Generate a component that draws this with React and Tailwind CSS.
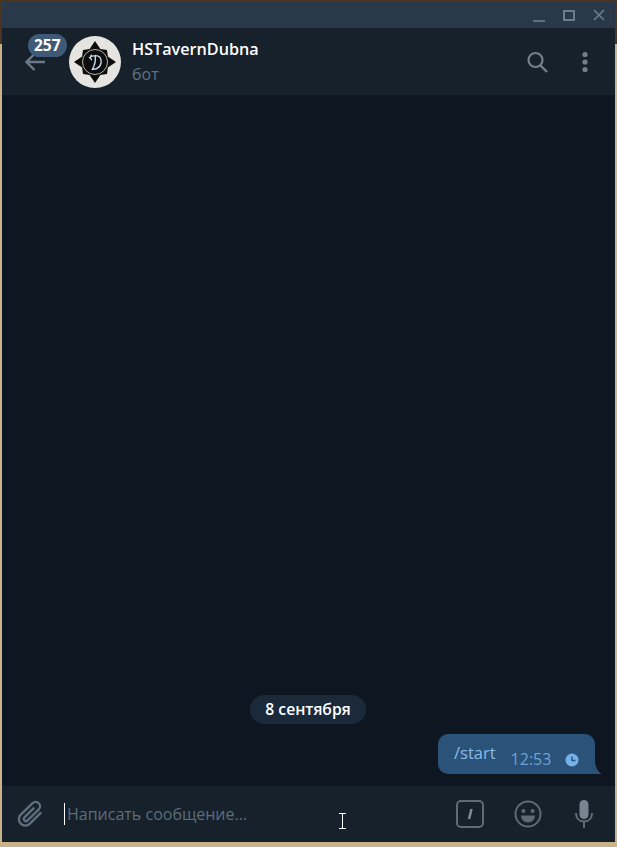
import React from "react";

const font = { fontFamily: '"Open Sans", sans-serif' };

const Avatar = () => (
  <svg viewBox="0 0 52 52" className="w-[52px] h-[52px] shrink-0">
    <circle cx="26" cy="26" r="26" fill="#e6e4e0" />
    <polygon
      points="26,5 31.4,13.1 38,14 38.9,20.6 47,26 38.9,31.4 38,38 31.4,38.9 26,47 20.6,38.9 14,38 13.100,31.4 5,26 13.100,20.6 14,14 20.6,13.100"
      fill="#0d0d0d"
    />
    <circle cx="26" cy="26" r="12.5" fill="#0d0d0d" stroke="#b9b2a6" strokeWidth="1" />
    <path
      d="M20 22c3-3 11-4 12 2 1 6-4 10-9 9M26 19c1 5 0 10-3 15M23 19c-2 1-2 4 0 5"
      fill="none"
      stroke="#c8dcec"
      strokeWidth="1.4"
    />
  </svg>
);

const App = () => {
  return (
    <div
      className="w-[617px] h-[847px] bg-[linear-gradient(#4a3424_44px,#c9b48a_44px)] flex flex-col overflow-hidden"
      style={font}
    >
      <div className="h-[2px] bg-[#4a3424] shrink-0" />
      <div className="flex-1 mx-[2px] mb-[5px] flex flex-col min-h-0">
        {/* title bar */}
        <div className="h-[26px] bg-[#2a3949] flex items-center justify-end shrink-0 pr-[10px] gap-[18px]">
          <div className="w-[12px] h-[2px] bg-[#5f7080] mt-[11px]" />
          <div className="w-[12px] h-[11px] border-2 border-[#6c7d8c]" />
          <svg viewBox="0 0 12 12" className="w-[12px] h-[12px]">
            <path d="M1 1l10 10M11 1L1 11" stroke="#6c7d8c" strokeWidth="1.6" />
          </svg>
        </div>

        {/* header */}
        <div className="h-[67px] bg-[#17212b] flex items-center shrink-0 relative pl-[67px] pr-[27px]">
          <svg viewBox="0 0 20 18" className="absolute left-[23px] top-[25px] w-[20px] h-[18px]">
            <path
              d="M20 9H1.500M9.500 1L1.500 9L9.500 17"
              fill="none"
              stroke="#6b7a88"
              strokeWidth="2.400"
            />
          </svg>
          <div className="absolute left-[26px] top-[6px] h-[23px] px-[6px] rounded-full bg-[#3e5a76] text-white text-[15.500px] font-bold leading-[22px]">
            257
          </div>
          <Avatar />
          <div className="ml-[11px] flex-1">
            <div className="text-white text-[16.200px] font-[550] leading-[22px]">HSTavernDubna</div>
            <div className="text-[#5d7286] text-[16px] leading-[22px] mt-[3px]">бот</div>
          </div>
          <svg viewBox="0 0 24 24" className="w-[24px] h-[24px]">
            <circle cx="10.500" cy="10" r="7" fill="none" stroke="#757f88" strokeWidth="2.2" />
            <path d="M15.500 15.500L22 22" stroke="#757f88" strokeWidth="2.400" />
          </svg>
          <svg viewBox="0 0 6 24" className="w-[6px] h-[24px] ml-[33px]">
            <circle cx="3" cy="4.500" r="2.600" fill="#757f88" />
            <circle cx="3" cy="12" r="2.600" fill="#757f88" />
            <circle cx="3" cy="19.500" r="2.600" fill="#757f88" />
          </svg>
        </div>

        {/* messages */}
        <div className="flex-1 min-h-0 bg-[#0e1621] flex flex-col justify-end">
          <div className="flex justify-center mb-[10px] pr-[1px]">
            <div className="h-[29px] px-[15px] rounded-full bg-[#1b2a3a] text-white text-[15.700px] font-semibold leading-[28px]">
              8 сентября
            </div>
          </div>
          <div className="flex justify-end pr-[20px] mb-[12px]">
            <div className="relative w-[157px] h-[40px] bg-[#2b5278] rounded-l-[10px] rounded-tr-[10px] flex items-start pl-[16px]">
              <span className="text-[#8ebbe6] text-[16.500px] leading-[20px] mt-[9px]">/start</span>
              <span className="text-[#6ba3d6] text-[16px] leading-[20px] mt-[15px] ml-[15px]">12:53</span>
              <svg viewBox="0 0 14 14" className="w-[14px] h-[14px] absolute right-[16px] top-[19px]">
                <circle cx="7" cy="7" r="6.500" fill="#76b1ea" />
                <path d="M7 3.500V7.500H10.500" fill="none" stroke="#2b5278" strokeWidth="1.400" />
              </svg>
              <svg viewBox="0 0 7 14" className="w-[7px] h-[14px] absolute left-full bottom-0">
                <path d="M0 0C0 7 3 12 7 14H0Z" fill="#2b5278" />
              </svg>
            </div>
          </div>
        </div>

        {/* composer */}
        <div className="h-[56px] bg-[#17212b] flex items-center shrink-0 relative pl-[15px] pr-[21px]">
          <svg viewBox="0 0 26 26" className="w-[28px] h-[28px]">
            <path
              d="M22.500 11.500L12 22a6 6 0 01-8.500-8.500L14.500 3a4 4 0 015.700 5.700L9.800 19a2 2 0 01-2.900-2.900L16 7"
              fill="none"
              stroke="#5f6f7d"
              strokeWidth="2.200"
            />
          </svg>
          <div className="w-[1px] h-[22px] bg-white ml-[19px] mr-[2px]" />
          <span className="flex-1 text-[#5d6c7a] text-[16px]">Написать сообщение...</span>
          <svg viewBox="0 0 28 28" className="w-[28px] h-[28px]">
            <rect x="1" y="1" width="26" height="26" rx="4" fill="none" stroke="#5f6b75" strokeWidth="2" />
            <path d="M15.500 9l-2.500 10" stroke="#838e98" strokeWidth="2.400" />
          </svg>
          <svg viewBox="0 0 28 28" className="w-[28px] h-[28px] ml-[30px]">
            <circle cx="14" cy="14" r="12.500" fill="none" stroke="#5f6b75" strokeWidth="2" />
            <circle cx="9.500" cy="11" r="2" fill="#5f6b75" />
            <circle cx="18.500" cy="11" r="2" fill="#5f6b75" />
            <path d="M7 15.500h14c0 4-3 7-7 7s-7-3-7-7z" fill="#5f6b75" />
          </svg>
          <svg viewBox="0 0 20 28" className="w-[20px] h-[28px] ml-[32px]">
            <rect x="5.500" y="0" width="9" height="19" rx="4.500" fill="#7a8591" />
            <path d="M2 13c0 5 3 8.500 8 8.500s8-3.500 8-8.500M10 21.500V28" fill="none" stroke="#5f6b75" strokeWidth="2" />
          </svg>
          {/* mouse cursor */}
          <svg viewBox="0 0 8 16" className="absolute left-[337px] top-[27px] w-[8px] h-[16px]">
            <path d="M0 .5h7M0 15.500h7M3.500 .5v15" fill="none" stroke="#fff" strokeWidth="1" />
          </svg>
        </div>
      </div>
    </div>
  );
};

export default App;
